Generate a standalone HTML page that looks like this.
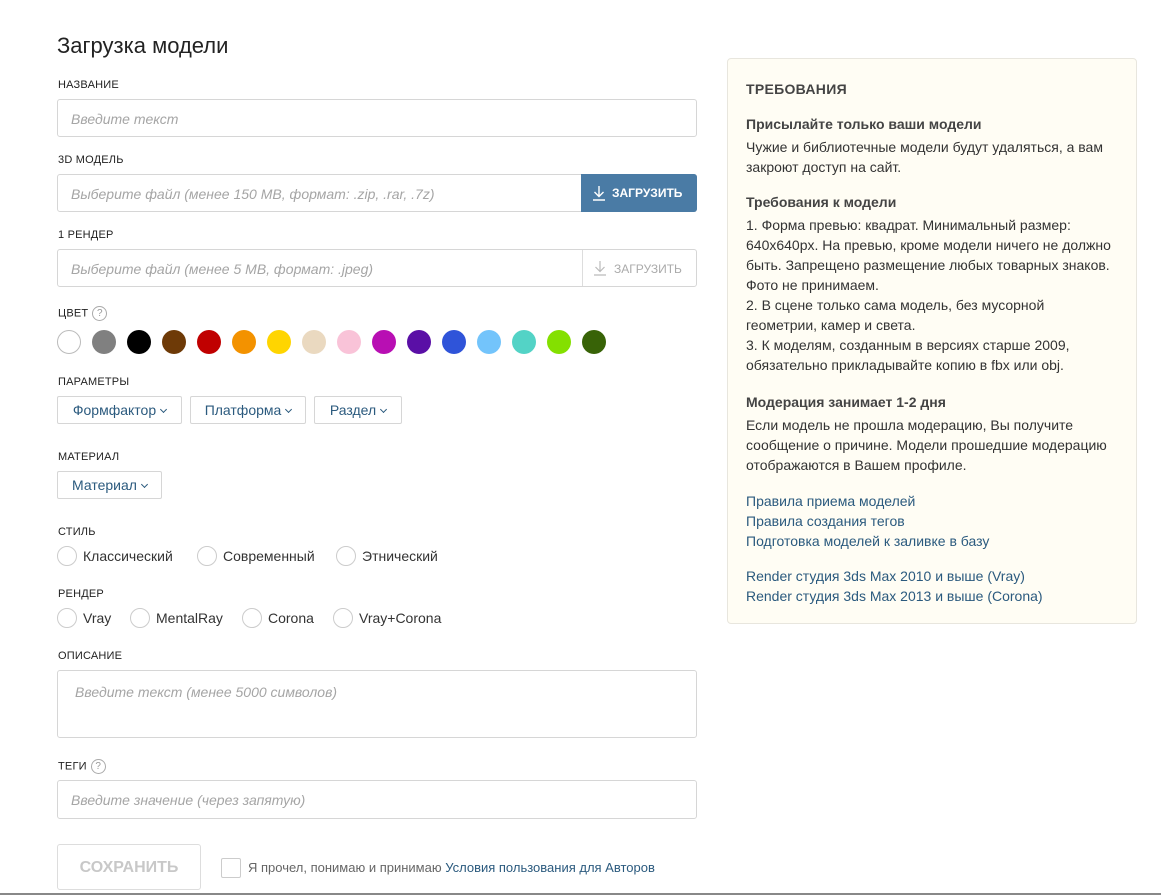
<!DOCTYPE html>
<html><head><meta charset="utf-8"><style>
*{box-sizing:border-box;margin:0;padding:0}
body{width:1161px;height:895px;background:#fff;font-family:"Liberation Sans",sans-serif;color:#333;position:relative;overflow:hidden}
.a{position:absolute}
.lbl{position:absolute;left:58px;font-size:11px;color:#222;text-transform:uppercase;letter-spacing:.2px}
.inp{position:absolute;left:57px;width:640px;border:1px solid #d6d6d6;border-radius:3px;background:#fff}
.ph{position:absolute;left:13px;font-size:14px;font-style:italic;color:#a5a5a5;white-space:nowrap}
.dot{position:absolute;top:330px;width:24px;height:24px;border-radius:50%}
.dd{position:absolute;height:28px;border:1px solid #d6d6d6;border-radius:2px;font-size:14px;color:#2b5a7e;line-height:26px;text-align:center}
.chev{display:inline-block;width:5px;height:5px;border-right:1.5px solid #2b5a7e;border-bottom:1.5px solid #2b5a7e;transform:rotate(45deg);margin-left:5px;position:relative;top:-3px}
.rad{position:absolute;width:20px;height:20px;border:1px solid #ccc;border-radius:50%}
.rt{position:absolute;font-size:14px;color:#333}
.q{display:inline-block;width:15px;height:15px;border:1px solid #aaa;border-radius:50%;font-size:10px;color:#999;text-align:center;line-height:13px;margin-left:4px;vertical-align:middle}
.pan{position:absolute;left:727px;top:58px;width:410px;height:566px;background:#fffdf4;border:1px solid #e8e6de;border-radius:4px;padding:0 18px;font-size:14px;line-height:20px;color:#333}
.pan h3{font-size:14px;font-weight:bold;color:#444;margin-top:0}
.pan a{color:#2b5a7e;text-decoration:none;display:block}
</style></head><body>
<div class="a" style="left:57px;top:33px;font-size:22px;color:#222">Загрузка модели</div>

<div class="lbl" style="top:79px">Название</div>
<div class="inp" style="top:99px;height:38px"><span class="ph" style="top:11px">Введите текст</span></div>

<div class="lbl" style="top:154px">3D модель</div>
<div class="inp" style="top:174px;height:38px"><span class="ph" style="top:11px">Выберите файл (менее 150 MB, формат: .zip, .rar, .7z)</span>
<div class="a" style="right:-1px;top:-1px;width:116px;height:38px;background:#4a7ba5;border-radius:0 3px 3px 0;color:#fff;font-size:12px;font-weight:bold;line-height:38px;padding-left:31px">ЗАГРУЗИТЬ
<svg class="a" style="left:11px;top:11px" width="14" height="16" viewBox="0 0 14 16"><path d="M7 1V11M2.5 7L7 11.5 11.5 7M1 15H13" stroke="#fff" stroke-width="1.4" fill="none"/></svg></div></div>

<div class="lbl" style="top:229px">1 рендер</div>
<div class="inp" style="top:249px;height:38px"><span class="ph" style="top:11px">Выберите файл (менее 5 MB, формат: .jpeg)</span>
<div class="a" style="right:0;top:0;width:114px;height:36px;border-left:1px solid #ddd;color:#aaa;font-size:12px;line-height:38px;padding-left:31px">ЗАГРУЗИТЬ
<svg class="a" style="left:10px;top:10px" width="14" height="16" viewBox="0 0 14 16"><path d="M7 1V11M2.5 7L7 11.5 11.5 7M1 15H13" stroke="#bbb" stroke-width="1.2" fill="none"/></svg></div></div>

<div class="lbl" style="top:306px">Цвет<span class="q">?</span></div>
<div class="dot" style="left:57px;border:1px solid #bbb;background:#fff"></div>
<div class="dot" style="left:92px;background:#808080"></div>
<div class="dot" style="left:127px;background:#000"></div>
<div class="dot" style="left:162px;background:#6e3a07"></div>
<div class="dot" style="left:197px;background:#c00000"></div>
<div class="dot" style="left:232px;background:#f39200"></div>
<div class="dot" style="left:267px;background:#ffd500"></div>
<div class="dot" style="left:302px;background:#ead9c0"></div>
<div class="dot" style="left:337px;background:#f9c3d8"></div>
<div class="dot" style="left:372px;background:#b80fb3"></div>
<div class="dot" style="left:407px;background:#5a0fa6"></div>
<div class="dot" style="left:442px;background:#2f54d9"></div>
<div class="dot" style="left:477px;background:#73c4fb"></div>
<div class="dot" style="left:512px;background:#53d3c6"></div>
<div class="dot" style="left:547px;background:#84e000"></div>
<div class="dot" style="left:582px;background:#386307"></div>

<div class="lbl" style="top:376px">Параметры</div>
<div class="dd" style="left:57px;top:396px;width:125px">Формфактор<span class="chev"></span></div>
<div class="dd" style="left:190px;top:396px;width:116px">Платформа<span class="chev"></span></div>
<div class="dd" style="left:314px;top:396px;width:88px">Раздел<span class="chev"></span></div>

<div class="lbl" style="top:451px">Материал</div>
<div class="dd" style="left:57px;top:471px;width:105px">Материал<span class="chev"></span></div>

<div class="lbl" style="top:526px">Стиль</div>
<div class="rad" style="left:57px;top:546px"></div><div class="rt" style="left:83px;top:548px">Классический</div>
<div class="rad" style="left:197px;top:546px"></div><div class="rt" style="left:223px;top:548px">Современный</div>
<div class="rad" style="left:336px;top:546px"></div><div class="rt" style="left:362px;top:548px">Этнический</div>

<div class="lbl" style="top:588px">Рендер</div>
<div class="rad" style="left:57px;top:608px"></div><div class="rt" style="left:83px;top:610px">Vray</div>
<div class="rad" style="left:130px;top:608px"></div><div class="rt" style="left:156px;top:610px">MentalRay</div>
<div class="rad" style="left:242px;top:608px"></div><div class="rt" style="left:268px;top:610px">Corona</div>
<div class="rad" style="left:333px;top:608px"></div><div class="rt" style="left:359px;top:610px">Vray+Corona</div>

<div class="lbl" style="top:650px">Описание</div>
<div class="inp" style="top:670px;height:68px"><span class="ph" style="top:13px;left:17px">Введите текст (менее 5000 символов)</span></div>

<div class="lbl" style="top:759px">Теги<span class="q">?</span></div>
<div class="inp" style="top:780px;height:39px"><span class="ph" style="top:11px">Введите значение (через запятую)</span></div>

<div class="a" style="left:57px;top:844px;width:144px;height:46px;border:1px solid #ddd;border-radius:3px;color:#c8c8c8;font-size:16px;font-weight:bold;text-align:center;line-height:46px">СОХРАНИТЬ</div>
<div class="a" style="left:221px;top:858px;width:20px;height:20px;border:1px solid #ccc;border-radius:2px"></div>
<div class="a" style="left:248px;top:860px;font-size:13px;color:#666">Я прочел, понимаю и принимаю <span style="color:#2b5a7e">Условия пользования для Авторов</span></div>
<div class="a" style="left:0;top:893px;width:1161px;height:2px;background:#888"></div>

<div class="pan">
<div style="font-size:14px;font-weight:bold;color:#444;margin-top:20px;letter-spacing:.3px">ТРЕБОВАНИЯ</div>
<h3 style="margin-top:15px">Присылайте только ваши модели</h3>
<p style="margin-top:3px">Чужие и библиотечные модели будут удаляться, а вам закроют доступ на сайт.</p>
<h3 style="margin-top:15px">Требования к модели</h3>
<p style="margin-top:3px">1. Форма превью: квадрат. Минимальный размер: 640x640px. На превью, кроме модели ничего не должно быть. Запрещено размещение любых товарных знаков. Фото не принимаем.<br>2. В сцене только сама модель, без мусорной геометрии, камер и света.<br>3. К моделям, созданным в версиях старше 2009, обязательно прикладывайте копию в fbx или obj.</p>
<h3 style="margin-top:17px">Модерация занимает 1-2 дня</h3>
<p style="margin-top:3px">Если модель не прошла модерацию, Вы получите сообщение о причине. Модели прошедшие модерацию отображаются в Вашем профиле.</p>
<div style="margin-top:16px"><a>Правила приема моделей</a><a>Правила создания тегов</a><a>Подготовка моделей к заливке в базу</a></div>
<div style="margin-top:15px"><a>Render студия 3ds Max 2010 и выше (Vray)</a><a>Render студия 3ds Max 2013 и выше (Corona)</a></div>
</div>
</body></html>
